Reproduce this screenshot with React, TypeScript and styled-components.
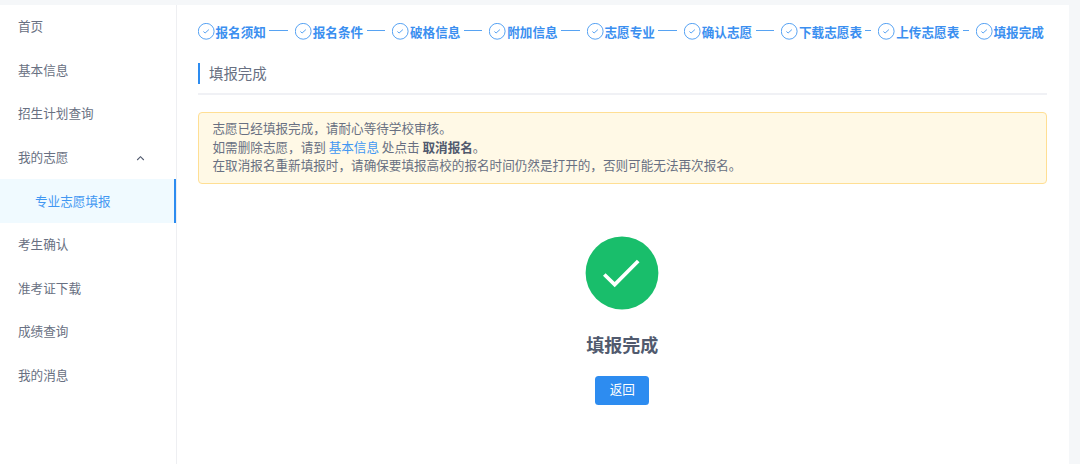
import React from 'react';
import styled, { createGlobalStyle, css } from 'styled-components';

const GlobalStyle = createGlobalStyle`
  * { box-sizing: border-box; }
  html, body { margin: 0; height: 100%; overflow: hidden; }
  body {
    background: #f5f7f9;
    color: #687082;
    font-family: "Noto Sans CJK SC", "Liberation Sans", sans-serif;
    font-size: 12.6px;
    font-weight: 400;
  }
`;

const Page = styled.div`
  display: flex;
  height: 464px;
  margin: 5px 11px 0 0;
  background: #fff;
`;

const Sidebar = styled.nav`
  flex: none;
  width: 177px;
  border-right: 1.5px solid #eeeff2;
`;

const MenuItem = styled.div<{ $child?: boolean; $active?: boolean }>`
  display: flex;
  align-items: center;
  justify-content: space-between;
  height: 43.57px;
  padding: 0 31px 2px ${p => (p.$child ? '35px' : '18px')};
  ${p =>
    p.$active &&
    css`
      color: #4197f2;
      background: #f0faff;
      border-right: 2px solid #2d8cf0;
    `}
`;

const Chevron = styled.svg`
  width: 9px;
  height: 6px;
  margin-top: 3px;
`;

const Content = styled.main`
  flex: 1;
  min-width: 0;
  padding: 17.5px 22px 0 20.5px;
`;

const Steps = styled.div`
  display: flex;
  height: 18px;
`;

const Step = styled.div`
  display: flex;
  align-items: center;
  flex: none;
  width: 97.25px;
  color: #3b8ff0;
`;

const StepIcon = styled.svg`
  flex: none;
  width: 17px;
  height: 17px;
`;

const StepLabel = styled.span`
  flex: none;
  margin-left: 1px;
  font-weight: 700;
  line-height: 17px;
  white-space: nowrap;
`;

const StepTail = styled.i`
  flex: 1;
  height: 1px;
  margin: 0 7px 2.5px 3.5px;
  background: #57a3f3;
`;

const SectionHeader = styled.header`
  height: 37px;
  margin-top: 17px;
  padding-top: 5px;
  border-bottom: 2px solid #f0f1f5;
`;

const SectionTitle = styled.h2`
  margin: 0;
  height: 21px;
  padding-left: 9.5px;
  border-left: 2px solid #2d8cf0;
  font-size: 14.4px;
  font-weight: 400;
  line-height: 19px;
`;

const Notice = styled.div`
  height: 72px;
  margin-top: 17px;
  padding: 6.5px 14px;
  border: 1px solid #ffdf94;
  border-radius: 4px;
  background: #fff9e6;
  line-height: 18.7px;
`;

const Link = styled.a`
  color: #4197f2;
`;

const Strong = styled.strong`
  font-weight: 700;
  color: #515a6e;
`;

const Result = styled.section`
  display: flex;
  flex-direction: column;
  align-items: center;
  margin-top: 52.5px;
`;

const ResultTitle = styled.h3`
  margin: 20.5px 0 18px;
  color: #515a6e;
  font-size: 18px;
  font-weight: 700;
  line-height: 27px;
`;

const Button = styled.button`
  width: 54px;
  height: 29px;
  padding: 0 0 3px;
  border: 0;
  border-radius: 3.5px;
  background: #2d8cf0;
  color: #fff;
  font: inherit;
`;

const menu = [
  { label: '首页' },
  { label: '基本信息' },
  { label: '招生计划查询' },
  { label: '我的志愿', open: true },
  { label: '专业志愿填报', child: true },
  { label: '考生确认' },
  { label: '准考证下载' },
  { label: '成绩查询' },
  { label: '我的消息' },
];

const steps = [
  '报名须知', '报名条件', '破格信息', '附加信息', '志愿专业',
  '确认志愿', '下载志愿表', '上传志愿表', '填报完成',
];

export default function App() {
  return (
    <>
      <GlobalStyle />
      <Page>
        <Sidebar>
          {menu.map(m => (
            <MenuItem key={m.label} $child={m.child} $active={m.child}>
              {m.label}
              {m.open && (
                <Chevron viewBox="0 0 9 6" fill="none" stroke="#515a6e" strokeWidth="1.1">
                  <path d="M1.2 5 4.5 1.7 7.8 5" />
                </Chevron>
              )}
            </MenuItem>
          ))}
        </Sidebar>
        <Content>
          <Steps>
            {steps.map((s, i) => (
              <Step key={s}>
                <StepIcon viewBox="0 0 17 17" fill="none" stroke="#2d8cf0">
                  <circle cx="8.2" cy="8.3" r="7.9" strokeWidth="0.8" />
                  <path d="M5.4 8.5 7.1 10 10.9 6.6" strokeWidth="0.8" />
                </StepIcon>
                <StepLabel>{s}</StepLabel>
                {i < steps.length - 1 && <StepTail />}
              </Step>
            ))}
          </Steps>
          <SectionHeader>
            <SectionTitle>填报完成</SectionTitle>
          </SectionHeader>
          <Notice>
            <div>志愿已经填报完成，请耐心等待学校审核。</div>
            <div>
              如需删除志愿，请到 <Link>基本信息</Link> 处点击 <Strong>取消报名</Strong>。
            </div>
            <div>在取消报名重新填报时，请确保要填报高校的报名时间仍然是打开的，否则可能无法再次报名。</div>
          </Notice>
          <Result>
            <svg width="74" height="74" viewBox="0 0 74 74" fill="none">
              <circle cx="37" cy="37" r="36.4" fill="#19be6b" />
              <path d="M19.3 38.5 29.7 48.6 53.2 25" stroke="#fff" strokeWidth="3.7" />
            </svg>
            <ResultTitle>填报完成</ResultTitle>
            <Button>返回</Button>
          </Result>
        </Content>
      </Page>
    </>
  );
}
